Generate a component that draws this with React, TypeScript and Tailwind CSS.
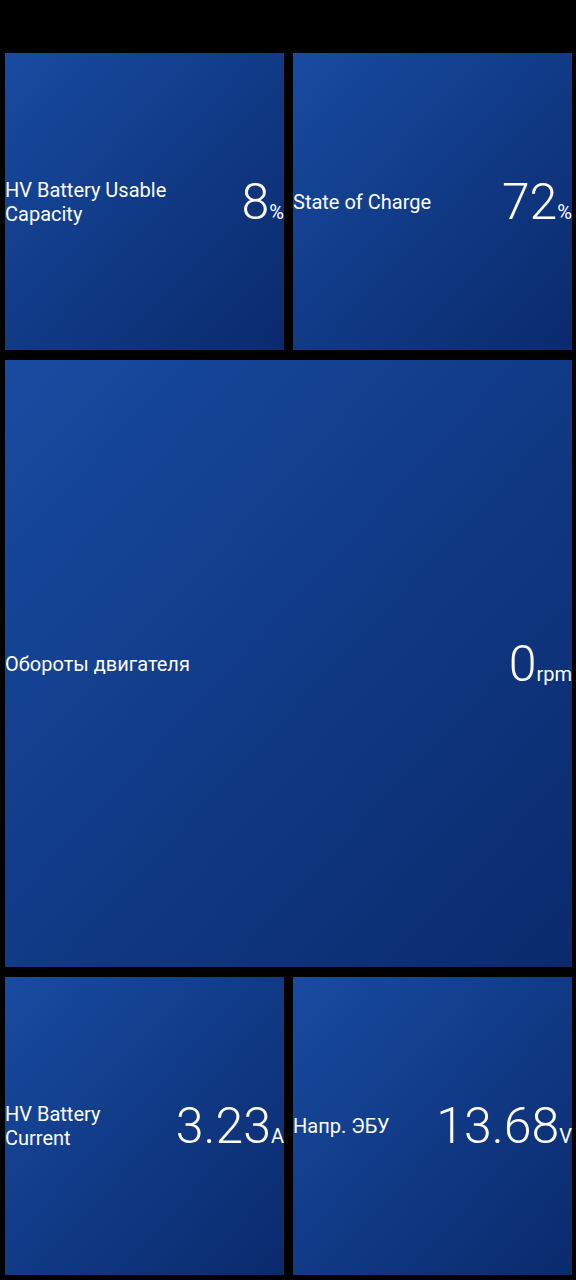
import React from 'react';

type TileProps = {
  label: string;
  value: string;
  unit: string;
};

// Single gauge tile: label on the left, big value + unit on the right
function Tile({ label, value, unit }: TileProps) {
  return (
    <div className="h-full flex items-center bg-linear-to-br from-[#184ba1] to-[#0a2a6c] text-white">
      <div className="flex-1 min-w-0 pr-[10px] text-[20px] leading-[24px]">{label}</div>
      <div className="shrink-0 flex items-baseline">
        <span className="text-[50px] leading-none font-light">{value}</span>
        <span className="text-[20px] leading-none font-normal">{unit}</span>
      </div>
    </div>
  );
}

export default function App() {
  return (
    <div
      className="w-[576px] h-[1280px] bg-black pt-[53px] pl-[5px] pr-[4px] flex flex-col gap-[10px]"
      style={{ fontFamily: 'Roboto, "Noto Sans", sans-serif' }}
    >
      <div className="grid grid-cols-2 gap-[9px] h-[297px]">
        <Tile label="HV Battery Usable Capacity" value="8" unit="%" />
        <Tile label="State of Charge" value="72" unit="%" />
      </div>

      <div className="h-[607px]">
        <Tile label="Обороты двигателя" value="0" unit="rpm" />
      </div>

      <div className="grid grid-cols-2 gap-[9px] h-[298px]">
        <Tile label="HV Battery Current" value="3.23" unit="A" />
        <Tile label="Напр. ЭБУ" value="13.68" unit="V" />
      </div>
    </div>
  );
}
